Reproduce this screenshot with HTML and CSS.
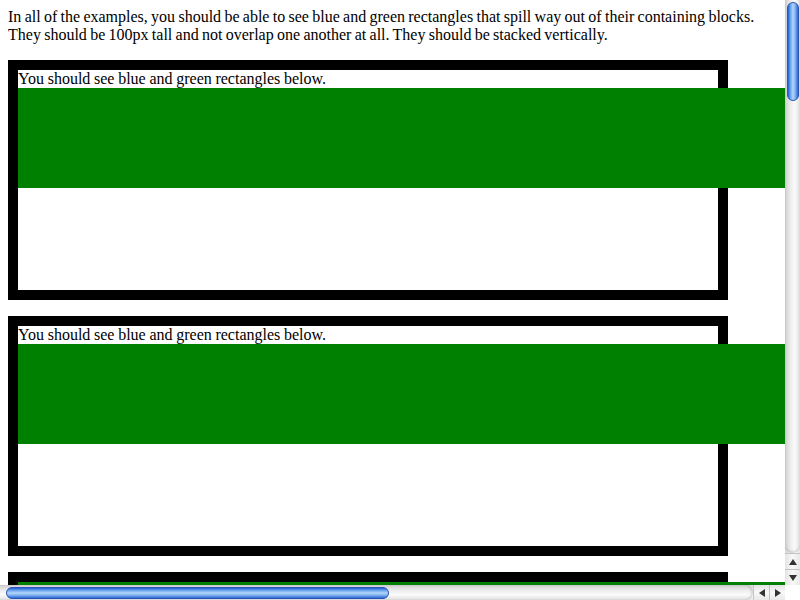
FILE: index.html
```html
<!DOCTYPE html>
<html>
<head>
<meta charset="utf-8">
<link rel="stylesheet" href="styles.css">
</head>
<body>
<p class="intro">In all of the examples, you should be able to see blue and green rectangles that spill way out of their containing blocks. They should be 100px tall and not overlap one another at all. They should be stacked vertically.</p>
<div class="box">
  <div class="line">You should see blue and green rectangles below.</div>
  <div class="green"></div>
</div>
<div class="box">
  <div class="line">You should see blue and green rectangles below.</div>
  <div class="green"></div>
</div>
<div class="box">
  <div class="green"></div>
</div>

<div class="vscroll">
  <div class="vtrack"><div class="vthumb"></div></div>
  <div class="arrow"><span class="tri-up"></span></div>
  <div class="arrow"><span class="tri-down"></span></div>
</div>
<div class="hscroll">
  <div class="htrack"><div class="hthumb"></div></div>
  <div class="harrow"><span class="tri-left"></span></div>
  <div class="harrow"><span class="tri-right"></span></div>
</div>
<div class="corner"></div>
</body>
</html>
```
FILE: styles.css
```css
html {
  overflow: hidden;
}
body {
  margin: 8px;
  font-family: "Liberation Serif", "Times New Roman", serif;
  font-size: 16px;
  line-height: 18px;
  color: #000;
  background: #fff;
}
.intro {
  margin: 0 0 16px 0;
  width: 770px;
  word-spacing: -0.7px;
}
.box {
  border: 10px solid #000;
  width: 700px;
  height: 220px;
  margin-bottom: 16px;
}
.line {
  height: 18px;
  white-space: nowrap;
  word-spacing: -0.3px;
}
.green {
  width: 1500px;
  height: 100px;
  background: #008000;
}

.vscroll {
  position: fixed;
  top: 0;
  right: 0;
  width: 15px;
  height: 585px;
  display: flex;
  flex-direction: column;
  background: linear-gradient(to right, #d6d6d6, #eeeeee 35%, #fdfdfd 65%, #e6e6e6);
}
.vtrack {
  flex: 1;
  padding: 2px 1px 0 2px;
  border-bottom-left-radius: 7px;
  border-bottom-right-radius: 7px;
  background: linear-gradient(to right, #cfcfcf, #ececec 35%, #fbfbfb 65%, #e0e0e0);
  box-shadow: inset 0 -2px 2px rgba(0,0,0,0.12);
}
.vthumb {
  height: 97px;
  border: 1px solid #2a54b8;
  border-radius: 6px;
  background: linear-gradient(to right, #1f5fd6, #6ea6ee 25%, #b4d6fa 50%, #7fb2f0 72%, #2b68d8);
}
.arrow {
  height: 15px;
  display: flex;
  align-items: center;
  justify-content: center;
  border-top: 1px solid #c4c4c4;
  background: linear-gradient(to right, #e4e4e4, #f8f8f8 50%, #e8e8e8);
}
.tri-up {
  width: 0;
  height: 0;
  border-left: 4px solid transparent;
  border-right: 4px solid transparent;
  border-bottom: 6px solid #333;
}
.tri-down {
  width: 0;
  height: 0;
  border-left: 4px solid transparent;
  border-right: 4px solid transparent;
  border-top: 6px solid #333;
}
.hscroll {
  position: fixed;
  left: 0;
  bottom: 0;
  width: 785px;
  height: 15px;
  display: flex;
  background: linear-gradient(to bottom, #d6d6d6, #eeeeee 35%, #fdfdfd 65%, #e6e6e6);
}
.htrack {
  flex: 1;
  padding: 2px 0 1px 6px;
  border-top-right-radius: 7px;
  border-bottom-right-radius: 7px;
  background: linear-gradient(to bottom, #cfcfcf, #ececec 35%, #fbfbfb 65%, #e0e0e0);
  box-shadow: inset -2px 0 2px rgba(0,0,0,0.12);
}
.hthumb {
  width: 381px;
  height: 10px;
  border: 1px solid #2a54b8;
  border-radius: 6px;
  background: linear-gradient(to bottom, #1f5fd6, #6ea6ee 25%, #b4d6fa 50%, #7fb2f0 72%, #2b68d8);
}
.harrow {
  width: 15px;
  display: flex;
  align-items: center;
  justify-content: center;
  border-left: 1px solid #c4c4c4;
  background: linear-gradient(to bottom, #e4e4e4, #f8f8f8 50%, #e8e8e8);
}
.tri-left {
  width: 0;
  height: 0;
  border-top: 4px solid transparent;
  border-bottom: 4px solid transparent;
  border-right: 6px solid #333;
}
.tri-right {
  width: 0;
  height: 0;
  border-top: 4px solid transparent;
  border-bottom: 4px solid transparent;
  border-left: 6px solid #333;
}
.corner {
  position: fixed;
  right: 0;
  bottom: 0;
  width: 15px;
  height: 15px;
  background: #fff;
}
```
